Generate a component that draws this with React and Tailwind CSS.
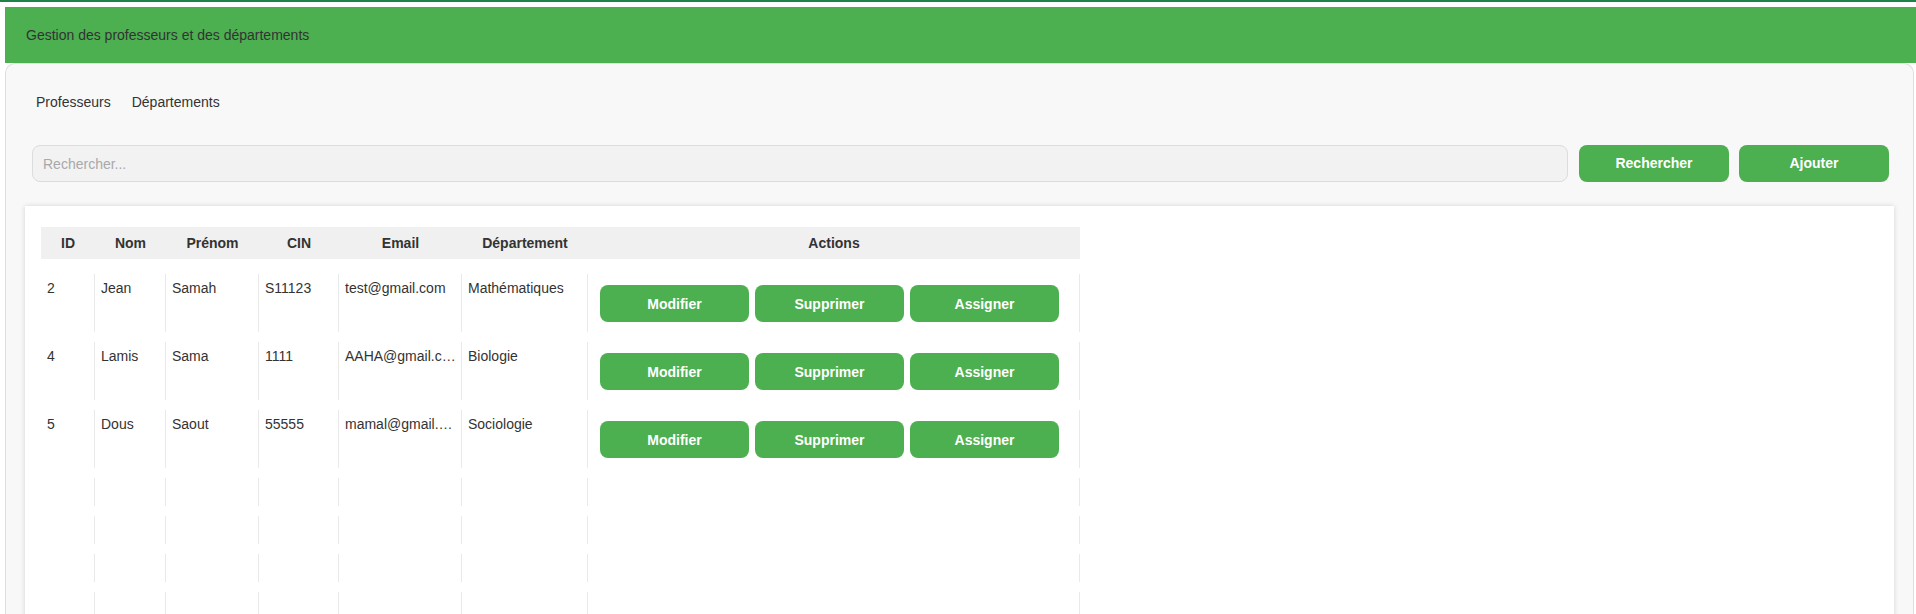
import React, { useState } from 'react';

const professeurs = [
  { id: 2, nom: 'Jean', prenom: 'Samah', cin: 'S11123', email: 'test@gmail.com', departement: 'Mathématiques' },
  { id: 4, nom: 'Lamis', prenom: 'Sama', cin: '1111', email: 'AAHA@gmail.com', departement: 'Biologie' },
  { id: 5, nom: 'Dous', prenom: 'Saout', cin: '55555', email: 'mamal@gmail.com', departement: 'Sociologie' },
];

const colonnes = [
  { label: 'ID', width: 'w-[54px]' },
  { label: 'Nom', width: 'w-[71px]' },
  { label: 'Prénom', width: 'w-[93px]' },
  { label: 'CIN', width: 'w-[80px]' },
  { label: 'Email', width: 'w-[123px]' },
  { label: 'Département', width: 'w-[126px]' },
  { label: 'Actions', width: 'w-[492px]' },
];

const cell = 'border-r border-[#e9e9e9] align-top pl-[6px] pr-[6px] pt-[6px] whitespace-nowrap overflow-hidden text-ellipsis';
const emailCell = 'border-r border-[#e9e9e9] align-top pl-[6px] pr-[4px] pt-[6px] whitespace-nowrap overflow-hidden text-ellipsis max-w-[123px]';

export default function App() {
  const [tab, setTab] = useState('professeurs');
  const [query, setQuery] = useState('');

  return (
    <div className="min-h-screen bg-white text-[14px] text-[#333] font-['Liberation_Sans',Arial,sans-serif]">
      <div className="h-[2px] bg-[#1d8347]" />

      <header className="mt-[5px] ml-[5px] h-[56px] bg-[#4caf50] pl-[21px] flex items-center">
        Gestion des professeurs et des départements
      </header>

      <div className="ml-[5px] mr-[2px] min-h-[560px] rounded-t-[10px] border border-b-0 border-[#dedede] bg-[#f8f8f8]">
        {/* onglets */}
        <div className="flex pt-[20px] pl-[20px]">
          <button
            onClick={() => setTab('professeurs')}
            className="px-[10px] py-[10px] leading-[16px] text-[#333]"
          >
            Professeurs
          </button>
          <button
            onClick={() => setTab('departements')}
            className="ml-px px-[10px] py-[10px] leading-[16px] text-[#333]"
          >
            Départements
          </button>
        </div>

        {/* barre de recherche */}
        <div className="mt-[25px] flex pl-[26px] pr-[24px]">
          <input
            type="text"
            value={query}
            onChange={(e) => setQuery(e.target.value)}
            placeholder="Rechercher..."
            className="flex-1 h-[37px] rounded-[8px] border border-[#dcdcdc] bg-[#f2f2f2] px-[10px] text-[14px] text-[#333] placeholder:text-[#a9a9a9] outline-none"
          />
          <button className="ml-[11px] w-[150px] h-[37px] rounded-[8px] bg-[#4caf50] text-white font-bold">
            Rechercher
          </button>
          <button className="ml-[10px] w-[150px] h-[37px] rounded-[8px] bg-[#4caf50] text-white font-bold">
            Ajouter
          </button>
        </div>

        {/* tableau */}
        <div className="mt-[24px] mx-[19px] bg-white shadow-[0_0_5px_rgba(0,0,0,0.15)] pt-[11px] px-[16px] min-h-[420px]">
          {tab === 'professeurs' && (
            <table className="table-fixed border-separate border-spacing-x-0 border-spacing-y-[10px] leading-[16px]">
              <thead>
                <tr>
                  {colonnes.map((c) => (
                    <th
                      key={c.label}
                      className={`${c.width} bg-[#f0f0f0] py-[8px] text-center font-bold text-[#333] border-b-[5px] border-white`}
                    >
                      {c.label}
                    </th>
                  ))}
                </tr>
              </thead>
              <tbody>
                {professeurs.map((p) => (
                  <tr key={p.id} className="h-[58px]">
                    <td className={cell}>{p.id}</td>
                    <td className={cell}>{p.nom}</td>
                    <td className={cell}>{p.prenom}</td>
                    <td className={cell}>{p.cin}</td>
                    <td className={emailCell}>{p.email}</td>
                    <td className={cell}>{p.departement}</td>
                    <td className="border-r border-[#e9e9e9] align-top pt-[11px] pl-[12px]">
                      <div className="flex gap-[6px]">
                        <button className="w-[149px] h-[37px] rounded-[8px] bg-[#4caf50] text-white font-bold">
                          Modifier
                        </button>
                        <button className="w-[149px] h-[37px] rounded-[8px] bg-[#4caf50] text-white font-bold">
                          Supprimer
                        </button>
                        <button className="w-[149px] h-[37px] rounded-[8px] bg-[#4caf50] text-white font-bold">
                          Assigner
                        </button>
                      </div>
                    </td>
                  </tr>
                ))}
                {[0, 1, 2, 3].map((i) => (
                  <tr key={`vide-${i}`} className="h-[28px]">
                    {colonnes.map((c) => (
                      <td key={c.label} className="border-r border-[#e9e9e9]" />
                    ))}
                  </tr>
                ))}
              </tbody>
            </table>
          )}
        </div>
      </div>
    </div>
  );
}
